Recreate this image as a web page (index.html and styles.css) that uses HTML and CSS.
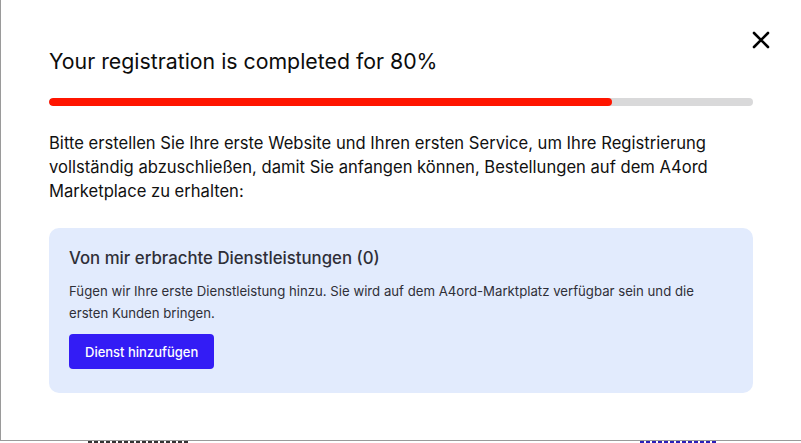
FILE: index.html
```html
<!DOCTYPE html>
<html lang="de">
<head>
  <meta charset="UTF-8" />
  <meta name="viewport" content="width=device-width, initial-scale=1.0" />
  <title>Registrierung</title>
  <link rel="stylesheet" href="styles.css">
</head>
<body>
<div class="modal">
  <div class="modal-head">
    <h2>Your registration is completed for 80%</h2>
    <button class="close" aria-label="Schließen">
      <svg width="18" height="18" viewBox="0 0 18 18">
        <path d="M2 2 L16 16 M16 2 L2 16" stroke="#000" stroke-width="2.6" stroke-linecap="round" />
      </svg>
    </button>
  </div>

  <div class="progress"><div class="progress-fill" style="width: 80%"></div></div>

  <p class="intro">Bitte erstellen Sie Ihre erste Website und Ihren ersten Service, um Ihre Registrierung vollständig abzuschließen, damit Sie anfangen können, Bestellungen auf dem A4ord Marketplace zu erhalten:</p>

  <div class="card">
    <h3>Von mir erbrachte Dienstleistungen (0)</h3>
    <p>Fügen wir Ihre erste Dienstleistung hinzu. Sie wird auf dem A4ord-Marktplatz verfügbar sein und die ersten Kunden bringen.</p>
    <button class="btn">Dienst hinzufügen</button>
  </div>
</div>

<!-- Seite hinter dem Dialog -->
<div class="page-peek">
  <span class="peek-dark"></span>
  <span class="peek-blue"></span>
</div>
</body>
</html>
```

FILE: styles.css
```css
body {
  font-family: Inter, 'Noto Sans', sans-serif;
  margin: 0;
  padding: 0;
  background: #fff;
  color: #111;
  overflow: hidden;
}
.modal {
  height: 441px;
  box-sizing: border-box;
  border-left: 1px solid #9a9a9a;
  border-bottom: 1px solid #9a9a9a;
  padding: 0 48px 0 48px;
  background: #fff;
}
.modal-head {
  display: flex;
  justify-content: space-between;
  align-items: flex-start;
  padding-top: 47px;
}
.modal-head h2 {
  margin: 0;
  font-size: 21.3px;
  font-weight: 400;
  line-height: 28px;
  color: #0c0c0c;
}
.close {
  margin-top: -16px;
  margin-right: -17px;
  padding: 0;
  border: none;
  background: none;
  cursor: pointer;
  line-height: 0;
}
.progress {
  margin-top: 23px;
  height: 8px;
  border-radius: 4px;
  background: #d9d9da;
  overflow: hidden;
}
.progress-fill {
  height: 100%;
  border-radius: 4px;
  background: #ff1500;
}
.intro {
  margin: 25px 0 0;
  font-size: 16.6px;
  line-height: 24px;
  color: #111;
}
.card {
  margin-top: 25px;
  padding: 18px 30px 24px 20px;
  border-radius: 10px;
  background: #e2ebfd;
}
.card h3 {
  margin: 0;
  font-size: 16.8px;
  font-weight: 500;
  line-height: 24px;
  color: #2f2f38;
}
.card p {
  margin: 10px 0 0;
  font-size: 13.2px;
  line-height: 22px;
  color: #2f2f38;
}
.btn {
  margin-top: 10px;
  height: 35px;
  padding: 0 16px;
  border: none;
  border-radius: 4px;
  background: #331cf5;
  color: #fff;
  font-family: inherit;
  font-size: 13px;
  font-weight: 500;
  cursor: pointer;
}
.page-peek {
  position: relative;
  height: 2px;
}
.page-peek span {
  position: absolute;
  top: 0;
  height: 2px;
}
.peek-dark {
  left: 88px;
  width: 100px;
  background: repeating-linear-gradient(90deg, #333 0 4px, transparent 4px 6px);
}
.peek-blue {
  left: 640px;
  width: 76px;
  background: repeating-linear-gradient(90deg, #2a1fb8 0 4px, transparent 4px 6px);
}
```
